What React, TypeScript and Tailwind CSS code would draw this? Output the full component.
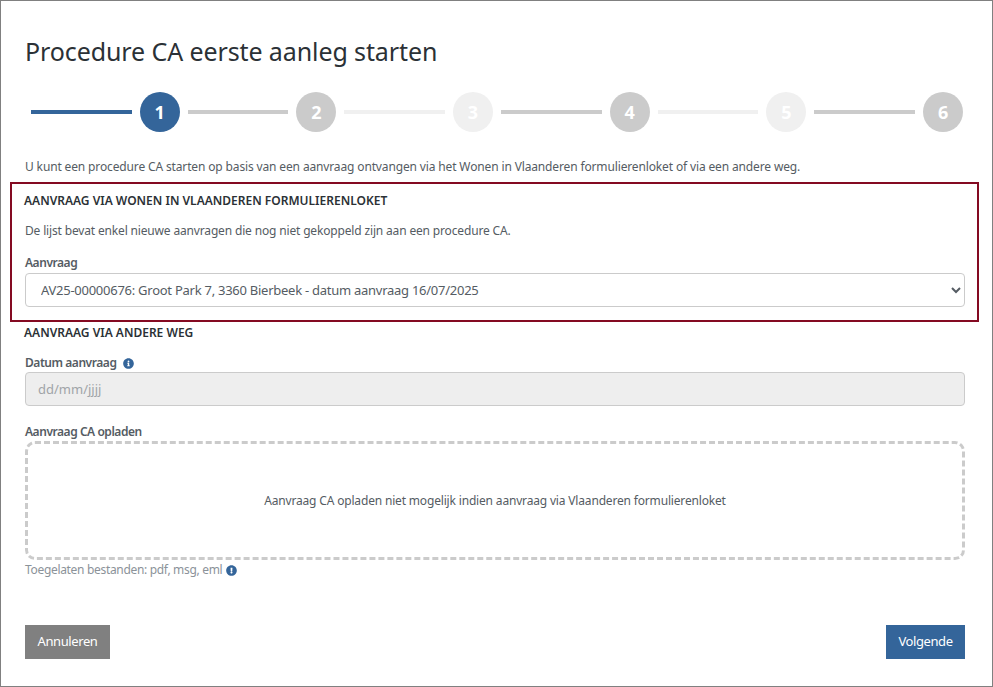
import { FaInfoCircle, FaExclamationCircle } from 'react-icons/fa';

const steps = [
  { n: 1, line: 'bg-[#34659a]', circle: 'bg-[#34659a]' },
  { n: 2, line: 'bg-[#cbcbcb]', circle: 'bg-[#cbcbcb]' },
  { n: 3, line: 'bg-[#f0f0f0]', circle: 'bg-[#f0f0f0]' },
  { n: 4, line: 'bg-[#cbcbcb]', circle: 'bg-[#cbcbcb]' },
  { n: 5, line: 'bg-[#f0f0f0]', circle: 'bg-[#f0f0f0]' },
  { n: 6, line: 'bg-[#cbcbcb]', circle: 'bg-[#cbcbcb]' },
];

export default function App() {
  return (
    <div className="w-[993px] h-[687px] bg-white border border-[#808080] pl-6 pr-[27px] pt-[35px] font-['Noto_Sans',sans-serif] text-[#333b41] overflow-hidden">
      {/* Title */}
      <h1 className="text-[25px] leading-[30px] text-[#2b3136] tracking-[-0.1px]">Procedure CA eerste aanleg starten</h1>

      {/* Stepper */}
      <div className="flex items-center gap-2 pl-[6px] pr-[2px] mt-[26px]">
        {steps.map((s) => (
          <div key={s.n} className="contents">
            <div className={`flex-1 h-1 ${s.line}`}></div>
            <div className={`w-10 h-10 rounded-full flex items-center justify-center text-white text-lg font-bold ${s.circle}`}>{s.n}</div>
          </div>
        ))}
      </div>

      <p className="mt-[26px] text-xs leading-[18px] text-[#555c63] tracking-[-0.14px]">
        U kunt een procedure CA starten op basis van een aanvraag ontvangen via het Wonen in Vlaanderen formulierenloket of via een andere weg.
      </p>

      {/* Highlighted block */}
      <div className="-ml-[15px] -mr-[14px] mt-[6px] h-[140px] border-2 border-[#840a22] pl-[13px] pr-3 pt-2">
        <h2 className="-ml-px text-xs leading-[18px] font-semibold text-[#2b3136]">AANVRAAG VIA WONEN IN VLAANDEREN FORMULIERENLOKET</h2>
        <p className="mt-3 text-xs leading-[18px] text-[#555c63] tracking-[-0.16px]">De lijst bevat enkel nieuwe aanvragen die nog niet gekoppeld zijn aan een procedure CA.</p>
        <label className="block mt-[14px] text-xs leading-[18px] font-semibold text-[#555c63] tracking-[-0.45px]">Aanvraag</label>
        <select className="block w-full mt-px h-[34px] rounded border border-[#cbcbcb] bg-white pl-[11px] text-[13px] text-[#555c63] tracking-[-0.26px]">
          <option>AV25-00000676: Groot Park 7, 3360 Bierbeek - datum aanvraag 16/07/2025</option>
        </select>
      </div>

      <h2 className="-ml-px mt-[2px] text-xs leading-[18px] font-semibold text-[#2b3136]">AANVRAAG VIA ANDERE WEG</h2>

      <div className="mt-3 flex items-center gap-[7px] text-xs leading-[18px] font-semibold text-[#555c63] tracking-[-0.45px]">
        <span>Datum aanvraag</span>
        <FaInfoCircle className="text-[11px] text-[#34659a]" />
      </div>
      <input
        disabled
        placeholder="dd/mm/jjjj"
        className="block w-full h-[34px] rounded border border-[#cbcbcb] bg-[#eeeeee] px-3 text-[13px] placeholder:text-[#a0a4a8]"
      />

      <label className="block mt-[17px] text-xs leading-[18px] font-semibold text-[#555c63] tracking-[-0.45px]">Aanvraag CA opladen</label>
      <div className="h-[119px] rounded-[10px] border-[3px] border-dashed border-[#cbcbcb] flex items-center justify-center text-xs text-[#555c63] tracking-[-0.17px]">
        Aanvraag CA opladen niet mogelijk indien aanvraag via Vlaanderen formulierenloket
      </div>
      <div className="mt-px flex items-center gap-1 text-xs leading-[18px] text-[#8b9299] tracking-[-0.32px]">
        <span>Toegelaten bestanden: pdf, msg, eml</span>
        <FaExclamationCircle className="text-[11px] text-[#34659a]" />
      </div>

      {/* Footer buttons */}
      <div className="mt-[46px] flex justify-between">
        <button className="h-[34px] w-[85px] bg-[#808080] text-white text-[13px] tracking-[-0.4px]">Annuleren</button>
        <button className="h-[34px] w-[79px] bg-[#34659a] text-white text-[13px] tracking-[-0.4px]">Volgende</button>
      </div>
    </div>
  );
}
